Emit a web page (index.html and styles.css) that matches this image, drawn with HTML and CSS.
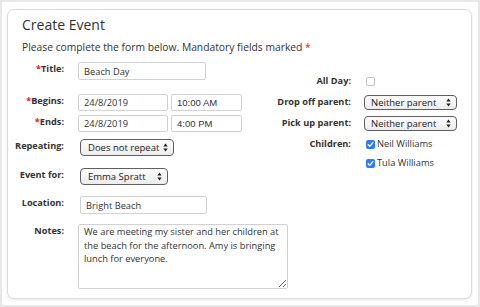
FILE: index.html
```html
<!DOCTYPE html>
<html lang="en">
<head>
<meta charset="utf-8">
<title>Create Event</title>
<link rel="stylesheet" href="styles.css">
</head>
<body>
<div class="frame">
  <section class="panel">
    <header class="head">
      <h1 class="title">Create Event</h1>
      <p class="intro">Please complete the form below. Mandatory fields marked <span class="req">*</span></p>
    </header>
    <div class="cols">
      <div class="col-left">
        <div class="row row-title">
          <span class="lbl"><span class="req">*</span>Title:</span>
          <input class="field f-title" type="text" value="Beach Day">
        </div>
        <div class="row row-begins">
          <span class="lbl"><span class="req">*</span>Begins:</span>
          <div class="pair">
            <input class="field f-date" type="text" value="24/8/2019">
            <input class="field f-time" type="text" value="10:00 AM">
          </div>
        </div>
        <div class="row row-ends">
          <span class="lbl"><span class="req">*</span>Ends:</span>
          <div class="pair">
            <input class="field f-date" type="text" value="24/8/2019">
            <input class="field f-time" type="text" value="4:00 PM">
          </div>
        </div>
        <div class="row row-repeat">
          <span class="lbl">Repeating:</span>
          <div class="select s-repeat"><span>Does not repeat</span><svg class="arrows" viewBox="0 0 5 9" width="5" height="9"><path d="M0.3 3.6 L2.5 0.6 L4.7 3.6 Z M0.3 5.4 L2.5 8.4 L4.7 5.4 Z"/></svg></div>
        </div>
        <div class="row row-for">
          <span class="lbl">Event for:</span>
          <div class="select s-for"><span>Emma Spratt</span><svg class="arrows" viewBox="0 0 5 9" width="5" height="9"><path d="M0.3 3.6 L2.5 0.6 L4.7 3.6 Z M0.3 5.4 L2.5 8.4 L4.7 5.4 Z"/></svg></div>
        </div>
        <div class="row row-loc">
          <span class="lbl">Location:</span>
          <input class="field f-loc" type="text" value="Bright Beach">
        </div>
        <div class="row row-notes">
          <span class="lbl">Notes:</span>
          <textarea class="notes">We are meeting my sister and her children at the beach for the afternoon. Amy is bringing lunch for everyone.</textarea>
        </div>
      </div>
      <div class="col-right">
        <div class="rrow rrow-allday">
          <span class="lbl">All Day:</span>
          <span class="check"></span>
        </div>
        <div class="rrow rrow-drop">
          <span class="lbl">Drop off parent:</span>
          <div class="select s-parent"><span>Neither parent</span><svg class="arrows" viewBox="0 0 5 9" width="5" height="9"><path d="M0.3 3.6 L2.5 0.6 L4.7 3.6 Z M0.3 5.4 L2.5 8.4 L4.7 5.4 Z"/></svg></div>
        </div>
        <div class="rrow rrow-pick">
          <span class="lbl">Pick up parent:</span>
          <div class="select s-parent"><span>Neither parent</span><svg class="arrows" viewBox="0 0 5 9" width="5" height="9"><path d="M0.3 3.6 L2.5 0.6 L4.7 3.6 Z M0.3 5.4 L2.5 8.4 L4.7 5.4 Z"/></svg></div>
        </div>
        <div class="rrow rrow-children">
          <span class="lbl">Children:</span>
          <ul class="kids">
            <li class="kid"><span class="check checked"><svg viewBox="0 0 9 9" width="9" height="9"><path d="M2.2 4.7 L3.8 6.4 L6.9 2.6"/></svg></span>Neil Williams</li>
            <li class="kid"><span class="check checked"><svg viewBox="0 0 9 9" width="9" height="9"><path d="M2.2 4.7 L3.8 6.4 L6.9 2.6"/></svg></span>Tula Williams</li>
          </ul>
        </div>
      </div>
    </div>
  </section>
</div>
</body>
</html>
```

FILE: styles.css
```css
* { box-sizing: border-box; }
html, body { margin: 0; padding: 0; }
body {
  font-family: "Open Sans", "Noto Sans", sans-serif;
  color: #333;
  background: #fff;
}
.frame {
  width: 480px;
  height: 307px;
  border: 2px solid #e8e8e8;
  padding: 7px 6px 0 5px;
  background: #fff;
}
.panel {
  height: 290px;
  border: 1px solid #dcdcdc;
  border-radius: 7px;
  box-shadow: 0 1px 3px rgba(0, 0, 0, 0.1);
  background: #fff;
}
.head { padding: 6px 0 0 14px; }
.title {
  margin: 0;
  font-size: 14px;
  line-height: 18px;
  font-weight: 400;
  color: #333;
}
.intro {
  margin: 6px 0 0;
  font-size: 10.3px;
  line-height: 14px;
}
.req { color: #e2231a; }
.cols {
  display: grid;
  grid-template-columns: 283px 1fr;
}
.row { display: flex; align-items: flex-start; gap: 14px; }
.lbl {
  flex: none;
  width: 56px;
  display: flex;
  justify-content: flex-end;
  white-space: nowrap;
  font-size: 9.2px;
  line-height: 13px;
  font-weight: 700;
  color: #333;
}
.row-title { margin-top: 8px; }
.row-begins { margin-top: 14px; }
.row-ends { margin-top: 4px; }
.row-repeat { margin-top: 7px; }
.row-for { margin-top: 12px; }
.row-loc { margin-top: 11px; }
.row-notes { margin-top: 10px; }

.field {
  -webkit-appearance: none;
  appearance: none;
  margin: 0;
  border: 1px solid #d2d2d2;
  border-radius: 2px;
  background: #fff;
  font-family: "Open Sans", sans-serif;
  font-size: 9.3px;
  color: #333;
  padding: 0 5px;
  outline: none;
}
.f-title { width: 128px; height: 18px; }
.f-loc { width: 127px; height: 18px; margin-left: 2px; }
.pair { display: flex; gap: 3px; }
.f-date { width: 90px; height: 17px; }
.f-time {
  width: 71px;
  height: 17px;
  font-family: "Liberation Sans", Arial, sans-serif;
  font-size: 9.5px;
}
.notes {
  display: block;
  width: 210px;
  height: 65px;
  margin: 0;
  border: 1px solid #d2d2d2;
  border-radius: 2px;
  padding: 0 5px;
  font-family: "Open Sans", sans-serif;
  font-size: 9.3px;
  line-height: 13.7px;
  color: #333;
  resize: both;
  outline: none;
}

.select {
  display: flex;
  align-items: center;
  justify-content: space-between;
  border: 1px solid #5f5f5f;
  border-radius: 4px;
  background: linear-gradient(#fcfcfc, #ececec);
  padding: 0 5px 0 7px;
  font-size: 9.5px;
  color: #222;
  white-space: nowrap;
  margin-left: 2px;
}
.arrows { fill: #222; flex: none; }
.s-repeat { width: 94px; height: 17px; }
.s-for { width: 88px; height: 17px; }
.s-parent { width: 93px; height: 15px; margin-left: 0; padding-left: 6px; }

.rrow { display: flex; align-items: flex-start; gap: 13px; }
.rrow .lbl { width: 60px; }
.rrow-allday { margin-top: 20px; }
.rrow-drop { margin-top: 8px; }
.rrow-pick { margin-top: 6px; }
.rrow-children { margin-top: 6px; }

.check {
  flex: none;
  display: inline-block;
  width: 9px;
  height: 9px;
  margin: 3px 0 0 2px;
  border: 1px solid #c4c4c4;
  border-radius: 2px;
  background: #fff;
}
.check.checked {
  border: none;
  background: #2f7df6;
}
.check svg {
  display: block;
  fill: none;
  stroke: #fff;
  stroke-width: 1.3;
  stroke-linecap: round;
  stroke-linejoin: round;
}
.kids {
  list-style: none;
  margin: 0;
  padding: 0;
}
.kid {
  display: flex;
  align-items: flex-start;
  gap: 2px;
  font-size: 9.3px;
  line-height: 13px;
  color: #333;
}
.kid + .kid { margin-top: 6px; }
```
